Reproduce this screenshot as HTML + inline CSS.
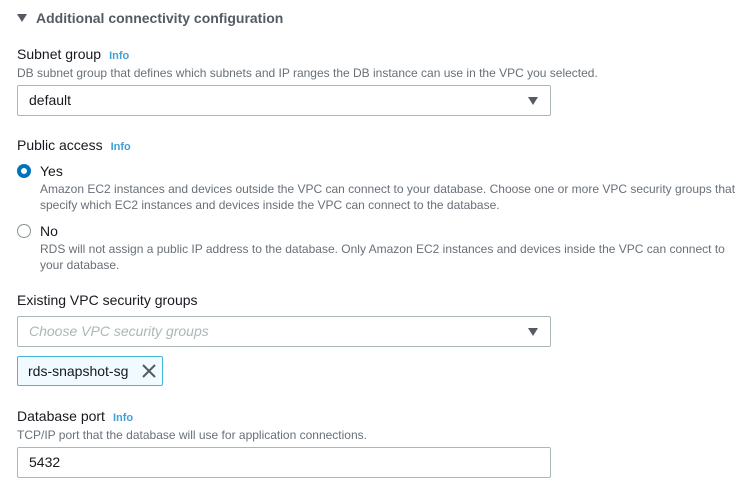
<!DOCTYPE html><html><head><style>
body{margin:0;width:750px;height:492px;background:#fff;font-family:"Liberation Sans",sans-serif;color:#16191f;position:relative;overflow:hidden}
.a{position:absolute;white-space:nowrap}
.h{font-size:14px;font-weight:bold;color:#545b64}
.l{font-size:14px}
.d{font-size:12px;color:#687078;line-height:16px}
.i{font-size:11px;font-weight:bold;color:#0073bb;color:#44a0d4;margin-left:8px}
.box{position:absolute;left:17px;width:532px;height:29px;border:1px solid #aab7b8;border-radius:2px;box-sizing:content-box}
.box span{position:absolute;left:11px;top:6px;font-size:14px}
.tri{position:absolute;right:12px;top:11px;width:0;height:0;border-left:5.5px solid transparent;border-right:5.5px solid transparent;border-top:8px solid #545b64}
.r{position:absolute;width:14px;height:14px;border-radius:50%;box-sizing:border-box}
</style></head><body>
<div class="a" style="left:17px;top:13px;width:0;height:0;border-left:5px solid transparent;border-right:5px solid transparent;border-top:8px solid #545b64;top:14px"></div>
<div class="a h" style="left:36px;top:10px">Additional connectivity configuration</div>
<div class="a l" style="left:17px;top:46px">Subnet group<span class="i">Info</span></div>
<div class="a d" style="left:17px;top:65px">DB subnet group that defines which subnets and IP ranges the DB instance can use in the VPC you selected.</div>
<div class="box" style="top:85px"><span>default</span><div class="tri"></div></div>
<div class="a l" style="left:17px;top:137px">Public access<span class="i">Info</span></div>
<div class="r" style="left:17px;top:164px;border:4px solid #0073bb"></div>
<div class="a l" style="left:40px;top:163px">Yes</div>
<div class="a d" style="left:40px;top:181px">Amazon EC2 instances and devices outside the VPC can connect to your database. Choose one or more VPC security groups that<br>specify which EC2 instances and devices inside the VPC can connect to the database.</div>
<div class="r" style="left:17px;top:224px;border:1px solid #879596"></div>
<div class="a l" style="left:40px;top:223px">No</div>
<div class="a d" style="left:40px;top:241px">RDS will not assign a public IP address to the database. Only Amazon EC2 instances and devices inside the VPC can connect to<br>your database.</div>
<div class="a l" style="left:17px;top:292px">Existing VPC security groups</div>
<div class="box" style="top:316px"><span style="color:#aab7b8;font-style:italic">Choose VPC security groups</span><div class="tri"></div></div>
<div class="a" style="left:17px;top:356px;width:144px;height:28px;border:1px solid #44b9d6;background:#f1faff;border-radius:2px"><span class="a" style="left:10px;top:6px;font-size:14px">rds-snapshot-sg</span>
<svg class="a" style="left:124px;top:7px" width="14" height="14"><path d="M1 1L13 13M13 1L1 13" stroke="#545b64" stroke-width="2"/></svg></div>
<div class="a l" style="left:17px;top:408px">Database port<span class="i">Info</span></div>
<div class="a d" style="left:17px;top:427px">TCP/IP port that the database will use for application connections.</div>
<div class="box" style="top:447px"><span>5432</span></div>
</body></html>
